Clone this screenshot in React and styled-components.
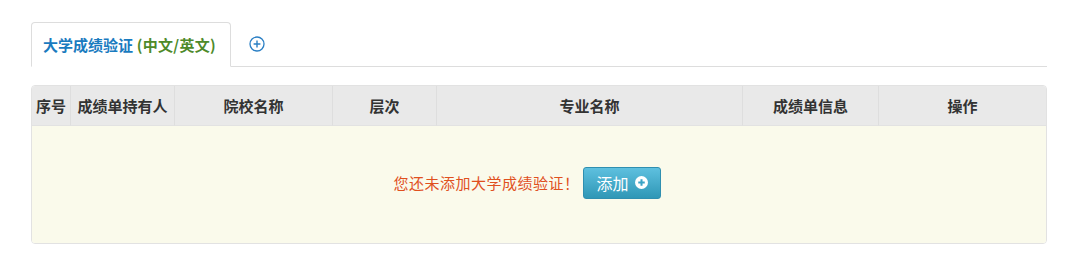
import React from 'react';
import styled, { createGlobalStyle } from 'styled-components';

const GlobalStyle = createGlobalStyle`
  body {
    margin: 0;
    background: #fff;
    font-family: "Microsoft YaHei", "Noto Sans CJK SC", "Noto Sans", sans-serif;
  }
`;

const Page = styled.div`
  width: 1016px;
  padding: 22px 0 0 31px;
`;

const TabBar = styled.div`
  display: flex;
  align-items: center;
  height: 44px;
  border-bottom: 1px solid #ddd;
`;

const Tab = styled.div`
  box-sizing: border-box;
  width: 200px;
  height: 45px;
  margin-bottom: -1px;
  display: flex;
  align-items: center;
  padding-left: 11px;
  border: 1px solid #ddd;
  border-bottom-color: #fff;
  border-radius: 4px 4px 0 0;
  background: #fff;
  font-size: 15px;
  font-weight: bold;
`;

const Blue = styled.span`
  color: #1a7bbf;
`;

const Green = styled.span`
  color: #4e8a2a;
  letter-spacing: 0.3px;
`;

const AddTab = styled.button`
  margin-left: 18px;
  padding: 0;
  border: none;
  background: none;
  display: flex;
  cursor: pointer;
`;

const Table = styled.table`
  margin-top: 18px;
  width: 1016px;
  border-collapse: separate;
  border-spacing: 0;
  border: 1px solid #e2e2e2;
  border-radius: 4px;
  overflow: hidden;
  table-layout: fixed;
`;

const Th = styled.th`
  height: 39px;
  padding: 0;
  background: #e9e9e9;
  border-bottom: 1px solid #e2e2e2;
  border-left: ${p => (p.$first ? 'none' : '1px solid #dedede')};
  color: #333;
  font-size: 15px;
  font-weight: bold;
  text-align: center;
  white-space: nowrap;
`;

const EmptyCell = styled.td`
  height: 113px;
  background: #fafaeb;
  text-align: center;
  padding: 0 0 4px 0;
`;

const EmptyRow = styled.div`
  display: flex;
  align-items: center;
  justify-content: center;
  gap: 3px;
  padding-right: 24px;
`;

const Notice = styled.span`
  color: #e0501e;
  font-size: 15px;
  letter-spacing: 0.5px;
`;

const AddButton = styled.button`
  display: flex;
  align-items: center;
  gap: 6px;
  height: 32px;
  padding: 0 12px 0 13px;
  border: 1px solid #2f8fb0;
  border-radius: 3px;
  background: linear-gradient(#5ec0df, #2f97b6);
  color: #fff;
  font-family: inherit;
  font-size: 16px;
  cursor: pointer;
`;

const columns = [
  { label: '序号', width: 38 },
  { label: '成绩单持有人', width: 104 },
  { label: '院校名称', width: 158 },
  { label: '层次', width: 104 },
  { label: '专业名称', width: 306 },
  { label: '成绩单信息', width: 136 },
  { label: '操作', width: 168 },
];

const App = () => (
  <Page>
    <GlobalStyle />
    <TabBar>
      <Tab>
        <Blue>大学成绩验证</Blue>
        <Green>&nbsp;(中文/英文)</Green>
      </Tab>
      <AddTab aria-label="添加">
        <svg width="16" height="16" viewBox="0 0 16 16">
          <circle cx="8" cy="8" r="7" fill="none" stroke="#2a7fc4" strokeWidth="1.3" />
          <path d="M8 4.6v6.8M4.6 8h6.8" stroke="#2a7fc4" strokeWidth="1.4" />
        </svg>
      </AddTab>
    </TabBar>
    <Table>
      <colgroup>
        {columns.map(c => (
          <col key={c.label} style={{ width: c.width }} />
        ))}
      </colgroup>
      <thead>
        <tr>
          {columns.map((c, i) => (
            <Th key={c.label} $first={i === 0}>{c.label}</Th>
          ))}
        </tr>
      </thead>
      <tbody>
        <tr>
          <EmptyCell colSpan={columns.length}>
            <EmptyRow>
              <Notice>您还未添加大学成绩验证！</Notice>
              <AddButton>
                添加
                <svg width="13" height="13" viewBox="0 0 14 14">
                  <circle cx="7" cy="7" r="7" fill="#fff" />
                  <path d="M7 3.5v7M3.5 7h7" stroke="#3aa3c6" strokeWidth="2.2" />
                </svg>
              </AddButton>
            </EmptyRow>
          </EmptyCell>
        </tr>
      </tbody>
    </Table>
  </Page>
);

export default App;
